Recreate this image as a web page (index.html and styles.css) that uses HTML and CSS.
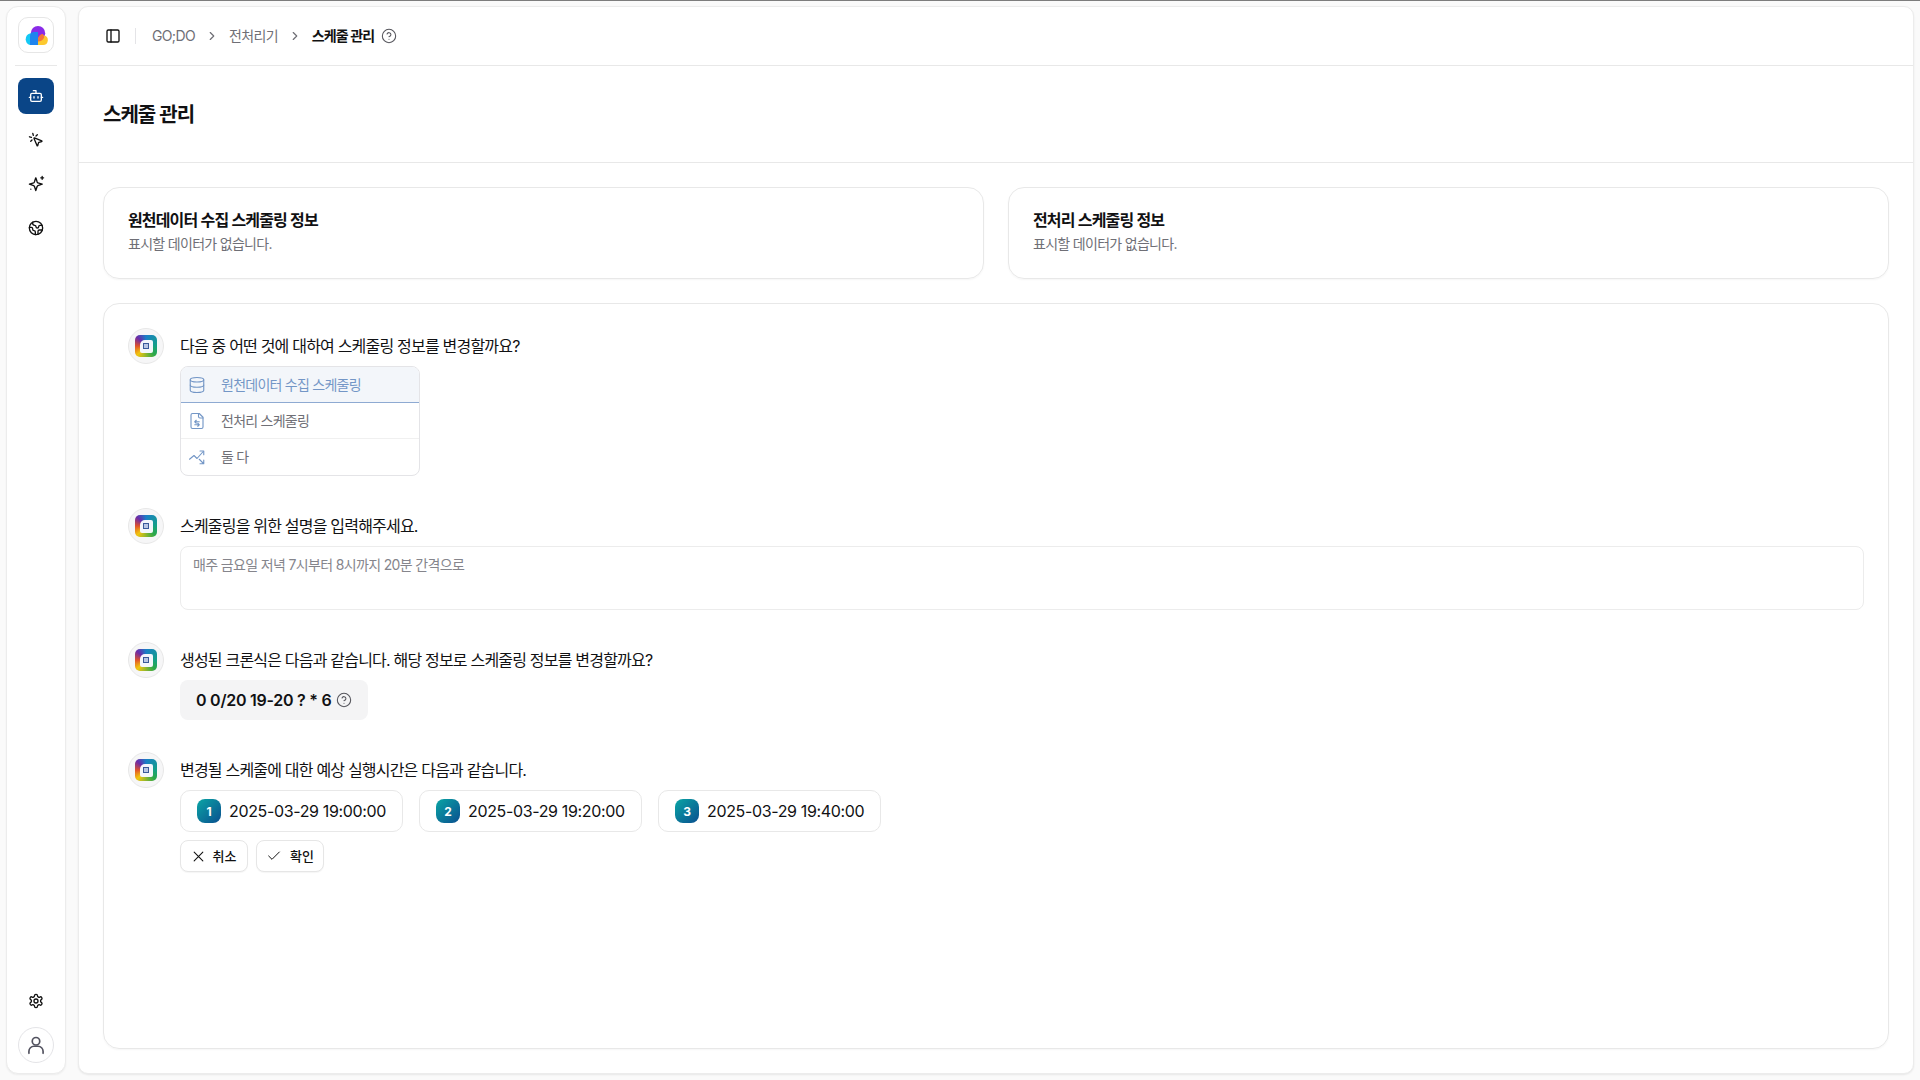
FILE: index.html
```html
<!DOCTYPE html>
<html lang="ko">
<head>
<meta charset="utf-8">
<title>스케줄 관리</title>
<link rel="stylesheet" href="styles.css">
</head>
<body>
<div class="app">
  <aside class="sidebar">
    <div class="logo-tile">
      <svg class="logo" width="24" height="19" viewBox="0 0 24 19">
        <circle cx="14" cy="7.200" r="7.200" fill="#8a2be8"/>
        <path d="M6 7.500a6 6 0 0 0 0 11.500h6V7.500z" fill="#14c8f5"/>
        <path d="M6 10a4.200 4.200 0 0 1 4-4h4v13H6z" fill="#1f84ee"/>
        <path d="M14 19v-6a5 5 0 0 1 6-3.500 4.800 4.800 0 0 1-1 9.500z" fill="#fcc92f"/>
        <path d="M14 13.500c0-3 2-5.500 5-5.500a7 7 0 0 1 1.200 3.500 7 7 0 0 1-6.200 4z" fill="#f4743a"/>
      </svg>
    </div>
    <div class="side-divider"></div>
    <nav class="side-nav">
      <a class="nav-item active"><svg class="ic" viewBox="0 0 24 24"><path d="M12 8V4H8"/><rect width="16" height="12" x="4" y="8" rx="2"/><path d="M2 14h2M20 14h2M15 13v2M9 13v2"/></svg></a>
      <a class="nav-item"><svg class="ic" viewBox="0 0 24 24"><path d="M14 4.100 12 6M5.100 8l-2.900-.8M6 12l-1.900 2M7.200 2.200 8 5.100"/><path d="M9.040 9.590a.5.5 0 0 1 .65-.65l11 4.500a.5.5 0 0 1-.07.95l-4.200 1.080a1 1 0 0 0-.72.72l-1.080 4.200a.5.5 0 0 1-.95.07z"/></svg></a>
      <a class="nav-item"><svg class="ic ic-star" viewBox="0 0 24 24"><path d="M11 4l2 6q.4.800 1 1l6 2-6 2q-.6.300-1 1l-2 6-2-6q-.3-.7-1-1l-6-2 6-2q.7-.3 1-1z"/><path d="M20 2v4M18 4h4M4 20h.01"/></svg></a>
      <a class="nav-item"><svg class="ic" viewBox="0 0 24 24"><circle cx="12" cy="12" r="10"/><path d="M7 3.340V5a3 3 0 0 0 3 3 2 2 0 0 1 2 2c0 1.100.9 2 2 2a2 2 0 0 0 2-2c0-1.100.9-2 2-2h3.170"/><path d="M11 21.950V18a2 2 0 0 0-2-2 2 2 0 0 1-2-2v-1a2 2 0 0 0-2-2H2.050"/><path d="M21.540 15H17a2 2 0 0 0-2 2v4.540"/></svg></a>
    </nav>
    <div class="side-foot">
      <a class="nav-item"><svg class="ic" viewBox="0 0 24 24"><path d="M12.220 2h-.44a2 2 0 0 0-2 2v.18a2 2 0 0 1-1 1.730l-.43.25a2 2 0 0 1-2 0l-.15-.08a2 2 0 0 0-2.730.73l-.22.38a2 2 0 0 0 .73 2.730l.15.1a2 2 0 0 1 1 1.720v.51a2 2 0 0 1-1 1.740l-.15.09a2 2 0 0 0-.73 2.730l.22.38a2 2 0 0 0 2.730.73l.15-.08a2 2 0 0 1 2 0l.43.25a2 2 0 0 1 1 1.730V20a2 2 0 0 0 2 2h.44a2 2 0 0 0 2-2v-.18a2 2 0 0 1 1-1.730l.43-.25a2 2 0 0 1 2 0l.15.08a2 2 0 0 0 2.730-.73l.22-.39a2 2 0 0 0-.73-2.730l-.15-.08a2 2 0 0 1-1-1.740v-.5a2 2 0 0 1 1-1.740l.15-.09a2 2 0 0 0 .73-2.730l-.22-.38a2 2 0 0 0-2.730-.73l-.15.08a2 2 0 0 1-2 0l-.43-.25a2 2 0 0 1-1-1.730V4a2 2 0 0 0-2-2z"/><circle cx="12" cy="12" r="3"/></svg></a>
      <div class="user-tile"><svg class="ic-user" viewBox="0 0 24 24"><circle cx="12" cy="7.500" r="4.500"/><path d="M3.500 22v-2.500a6 6 0 0 1 6-6h5a6 6 0 0 1 6 6V22"/></svg></div>
    </div>
  </aside>

  <main class="main">
    <header class="topbar">
      <svg class="ic-bar" viewBox="0 0 24 24"><rect width="18" height="18" x="3" y="3" rx="2"/><path d="M9 3v18"/></svg>
      <span class="top-sep"></span>
      <span class="crumb">GO;DO</span>
      <svg class="ic-chev" viewBox="0 0 24 24"><path d="m9 18 6-6-6-6"/></svg>
      <span class="crumb">전처리기</span>
      <svg class="ic-chev" viewBox="0 0 24 24"><path d="m9 18 6-6-6-6"/></svg>
      <span class="crumb current">스케줄 관리</span>
      <svg class="ic-help" viewBox="0 0 24 24"><circle cx="12" cy="12" r="10"/><path d="M9.090 9a3 3 0 0 1 5.830 1c0 2-3 3-3 3M12 17h.01"/></svg>
    </header>
    <section class="page-title"><h1>스케줄 관리</h1></section>
    <div class="content">
      <div class="info-row">
        <div class="info-card"><h2>원천데이터 수집 스케줄링 정보</h2><p>표시할 데이터가 없습니다.</p></div>
        <div class="info-card"><h2>전처리 스케줄링 정보</h2><p>표시할 데이터가 없습니다.</p></div>
      </div>
      <div class="chat-card">
        <div class="msg">
          <div class="avatar"><span class="bot-mark"><span class="bot-inner"><span class="bot-dot"></span></span></span></div>
          <div class="msg-body">
            <div class="msg-text">다음 중 어떤 것에 대하여 스케줄링 정보를 변경할까요?</div>
            <ul class="options">
              <li class="option selected"><svg class="ic-opt" viewBox="0 0 24 24"><ellipse cx="12" cy="5" rx="9" ry="3"/><path d="M3 5v14a9 3 0 0 0 18 0V5"/><path d="M3 12a9 3 0 0 0 18 0"/></svg><span>원천데이터 수집 스케줄링</span></li>
              <li class="option"><svg class="ic-opt" viewBox="0 0 24 24"><path d="M15 2H6a2 2 0 0 0-2 2v16a2 2 0 0 0 2 2h12a2 2 0 0 0 2-2V7z"/><path d="M14 2v4a2 2 0 0 0 2 2h4"/><path d="M9 13h6M9 17h6M11 11l-2 2 2 2M13 15l2 2-2 2"/></svg><span>전처리 스케줄링</span></li>
              <li class="option"><svg class="ic-opt" viewBox="0 0 24 24"><path d="M2 15l6-5 4 4 8-9"/><path d="M16 4h5v5"/><path d="M15 15l5 5M21 16v5h-5"/></svg><span>둘 다</span></li>
            </ul>
          </div>
        </div>
        <div class="msg">
          <div class="avatar"><span class="bot-mark"><span class="bot-inner"><span class="bot-dot"></span></span></span></div>
          <div class="msg-body">
            <div class="msg-text">스케줄링을 위한 설명을 입력해주세요.</div>
            <div class="desc-box">매주 금요일 저녁 7시부터 8시까지 20분 간격으로</div>
          </div>
        </div>
        <div class="msg">
          <div class="avatar"><span class="bot-mark"><span class="bot-inner"><span class="bot-dot"></span></span></span></div>
          <div class="msg-body">
            <div class="msg-text">생성된 크론식은 다음과 같습니다. 해당 정보로 스케줄링 정보를 변경할까요?</div>
            <div class="cron"><span>0 0/20 19-20 ? * 6</span><svg class="ic-help" viewBox="0 0 24 24"><circle cx="12" cy="12" r="10"/><path d="M9.090 9a3 3 0 0 1 5.830 1c0 2-3 3-3 3M12 17h.01"/></svg></div>
          </div>
        </div>
        <div class="msg">
          <div class="avatar"><span class="bot-mark"><span class="bot-inner"><span class="bot-dot"></span></span></span></div>
          <div class="msg-body">
            <div class="msg-text">변경될 스케줄에 대한 예상 실행시간은 다음과 같습니다.</div>
            <div class="times">
              <div class="time-chip"><span class="num">1</span>2025-03-29 19:00:00</div>
              <div class="time-chip"><span class="num">2</span>2025-03-29 19:20:00</div>
              <div class="time-chip"><span class="num">3</span>2025-03-29 19:40:00</div>
            </div>
            <div class="actions">
              <button class="btn"><svg class="ic-btn" viewBox="3 3 18 18"><path d="M18 6 6 18M6 6l12 12"/></svg><span>취소</span></button>
              <button class="btn"><svg class="ic-btn" viewBox="0 0 24 24"><path d="M20 6 9 17l-5-5"/></svg><span>확인</span></button>
            </div>
          </div>
        </div>
      </div>
    </div>
  </main>
</div>
</body>
</html>
```

FILE: styles.css
```css
* { box-sizing: border-box; }
html, body { margin: 0; height: 100%; }
body {
  background: #fafafa;
  border-top: 1px solid #7d7d7d;
  color: #111113;
  font-family: Inter, "Noto Sans CJK KR", "Noto Sans", sans-serif;
  font-size: 14px;
  overflow: hidden;
}
svg { fill: none; stroke: currentColor; stroke-linecap: round; stroke-linejoin: round; flex: none; display: block; }
svg.logo { stroke: none; }
.app { display: flex; gap: 12px; height: 1079px; padding: 5px 6px 6px 6px; }

.sidebar {
  width: 60px; flex: none; display: flex; flex-direction: column; align-items: center;
  background: #fff; border: 1px solid #ececec; border-radius: 12px;
  box-shadow: 0 1px 2px rgba(0,0,0,.06);
  padding: 10px 0 10px;
}
.logo-tile {
  width: 36px; height: 36px; border: 1px solid #e6e6e6; border-radius: 10px;
  display: flex; align-items: center; justify-content: center;
}
.side-divider { width: 42px; height: 1px; background: #e8e8e8; margin: 12px 0; }
.side-nav, .side-foot { display: flex; flex-direction: column; align-items: center; gap: 8px; }
.side-foot { margin-top: auto; gap: 8px; }
.nav-item { width: 36px; height: 36px; border-radius: 8px; display: flex; align-items: center; justify-content: center; color: #111; }
.nav-item.active { background: #0a4587; color: #fff; }
.ic { width: 16px; height: 16px; stroke-width: 2; }
.ic-star { width: 17px; height: 17px; stroke-width: 1.900; margin-bottom: 1px; }
.user-tile { width: 36px; height: 36px; border: 1px solid #e4e4e7; border-radius: 50%; display: flex; align-items: center; justify-content: center; color: #52525f; }
.ic-user { width: 20px; height: 20px; stroke-width: 2; }

.main {
  flex: 1; display: flex; flex-direction: column; min-width: 0;
  background: #fff; border: 1px solid #ececec; border-radius: 10px;
  box-shadow: 0 1px 2px rgba(0,0,0,.08);
}
.topbar { height: 59px; flex: none; display: flex; align-items: center; padding: 0 0 0 26px; border-bottom: 1px solid #e8e8e8; }
.ic-bar { width: 16px; height: 16px; stroke-width: 2; color: #111; }
.top-sep { width: 1px; height: 16px; background: #e4e4e7; margin: 0 16px 0 14px; }
.crumb { color: #6f6f76; font-size: 14px; letter-spacing: -.65px; padding-bottom: 2px; }
.crumb.current { color: #111; font-weight: 600; letter-spacing: -.95px; }
.ic-chev { width: 14px; height: 14px; stroke-width: 2; color: #6f6f76; margin: 0 10px; }
.ic-help { width: 16px; height: 16px; stroke-width: 1.600; color: #55555c; margin-left: 7px; }

.page-title { height: 97px; flex: none; display: flex; align-items: center; padding: 0 24px; border-bottom: 1px solid #e8e8e8; }
.page-title h1 { margin: 0; padding-bottom: 1px; font-size: 20px; font-weight: 600; letter-spacing: -1px; }

.content { flex: 1; display: flex; flex-direction: column; gap: 24px; padding: 24px 24px 24px; min-height: 0; }
.info-row { display: grid; grid-template-columns: 1fr 1fr; gap: 24px; }
.info-card { height: 92px; border: 1px solid #e8e8e8; border-radius: 16px; padding: 20px 24px; box-shadow: 0 1px 2px rgba(0,0,0,.04); }
.info-card h2 { margin: 0 0 2px; font-size: 16px; line-height: 24px; font-weight: 600; letter-spacing: -.85px; }
.info-card p { margin: 0; font-size: 14px; line-height: 20px; color: #6f6f76; letter-spacing: -.7px; }

.chat-card { flex: 1; border: 1px solid #e8e8e8; border-radius: 16px; padding: 24px 24px; display: flex; flex-direction: column; gap: 32px; box-shadow: 0 1px 2px rgba(0,0,0,.04); }
.msg { display: flex; gap: 16px; }
.avatar { width: 36px; height: 36px; flex: none; border: 1px solid #e8e8e8; border-radius: 50%; background: #f6f6f7; display: flex; align-items: center; justify-content: center; }
.bot-mark { width: 22px; height: 22px; border-radius: 5px; display: flex; align-items: center; justify-content: center;
  background: conic-gradient(from 0deg, #1a7fc8, #14a085 90deg, #2aa84a 135deg, #f2c40f 225deg, #e0522a 270deg, #6a2aa8 315deg, #1a7fc8); }
.bot-inner { width: 13px; height: 13px; background: #f4f6fb; border-radius: 5px 2px 2px 2px; display: flex; align-items: center; justify-content: center; }
.bot-dot { width: 6px; height: 6px; border: 1px solid #3a5a9a; background: #b9c6e4; }
.msg-body { flex: 1; min-width: 0; display: flex; flex-direction: column; gap: 2px; }
.msg-text { height: 36px; line-height: 36px; font-size: 16px; letter-spacing: -.8px; }

.options { list-style: none; margin: 0; padding: 0; width: 240px; border: 1px solid #e4e4e7; border-radius: 8px; overflow: hidden; }
.option { height: 36px; display: flex; align-items: center; gap: 15px; padding: 0 7px; color: #6f6f76; font-size: 14px; letter-spacing: -.75px; border-bottom: 1px solid #f0f0f0; }
.option span { padding-bottom: 2px; }
.option:last-child { border-bottom: 0; }
.option.selected { background: #f3f6fa; color: #7396c6; border-bottom: 1px solid #8eaad2; }
.ic-opt { width: 18px; height: 18px; stroke-width: 1.500; color: #7396c6; }

.desc-box { height: 64px; border: 1px solid #ececec; border-radius: 8px; padding: 8px 12px; font-size: 14px; line-height: 20px; color: #85858c; letter-spacing: -.65px; }

.cron { align-self: flex-start; height: 40px; display: flex; align-items: center; padding: 0 16px; background: #f4f4f5; border-radius: 8px; font-size: 16px; font-weight: 600; letter-spacing: -.25px; }
.cron .ic-help { margin-left: 5px; }

.times { display: flex; gap: 16px; }
.time-chip { width: 223px; height: 42px; display: flex; align-items: center; gap: 8px; padding: 0 16px; border: 1px solid #e8e8e8; border-radius: 10px; font-size: 16px; white-space: nowrap; letter-spacing: -.35px; }
.num { width: 24px; height: 24px; flex: none; border-radius: 8px; display: flex; align-items: center; justify-content: center; color: #fff; font-size: 12px; font-weight: 700; letter-spacing: 0; background: linear-gradient(135deg, #0aa5a5, #0a4f8f); }

.actions { display: flex; gap: 8px; margin-top: 6px; }
.btn { width: 68px; height: 32px; display: flex; align-items: center; justify-content: center; gap: 8px; padding: 0; background: #fff; border: 1px solid #e6e6e6; border-radius: 8px; font: 500 13px Inter, "Noto Sans CJK KR", sans-serif; color: #111; box-shadow: 0 1px 1px rgba(0,0,0,.04); }
.btn span { padding-bottom: 2px; }
.ic-btn { width: 16px; height: 16px; stroke-width: 1.500; }
.btn:first-child .ic-btn { width: 13px; height: 13px; }
```
